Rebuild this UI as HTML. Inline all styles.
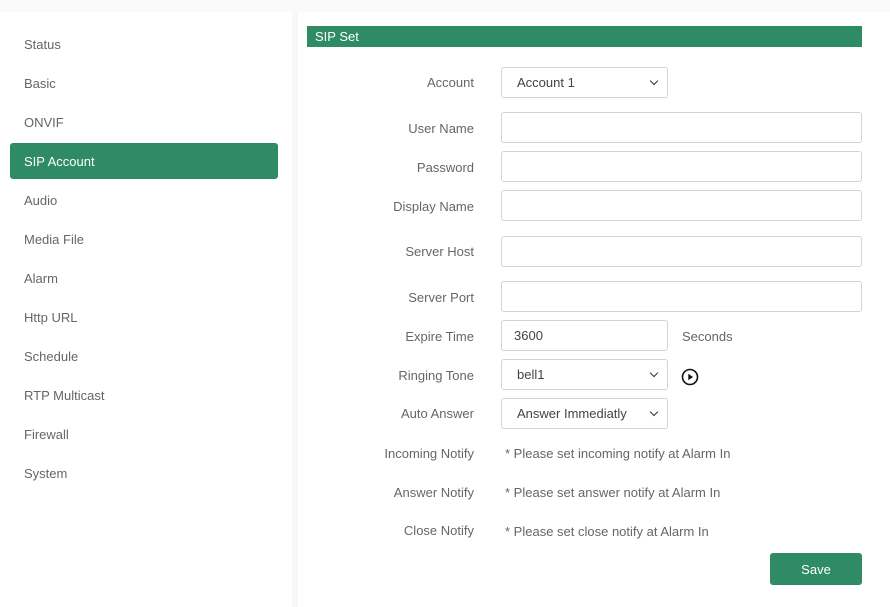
<!DOCTYPE html>
<html><head><meta charset="utf-8"><style>
*{box-sizing:border-box;margin:0;padding:0}
body{width:890px;height:607px;background:#fff;font-family:"Liberation Sans",Arial,sans-serif;font-size:13px;color:#666;position:relative;overflow:hidden}
.top{position:absolute;left:0;top:0;width:890px;height:12px;background:#fafafa}
.side{position:absolute;left:0;top:12px;width:292px;height:595px;background:#fff}
.divider{position:absolute;left:292px;top:12px;width:6px;height:595px;background:#f8f8f8}
.item{position:absolute;left:24px;height:20px;line-height:20px;top:1px}
.active{position:absolute;left:10px;top:143px;width:268px;height:36px;background:#2e8b63;border-radius:3px;color:#fff;padding-left:14px;line-height:37px}
.hdr{position:absolute;left:307px;top:26px;width:555px;height:21px;background:#2e8b63;color:#fff;padding-left:8px;line-height:22px}
.lbl{position:absolute;right:416px;height:20px;line-height:22px;text-align:right;white-space:nowrap}
.inp{position:absolute;left:501px;width:361px;height:31px;border:1px solid #d4d4d4;border-radius:3px;background:#fff}
.sel{width:167px;padding-left:15px;line-height:30px;color:#444}
.sel:after{content:"";position:absolute;right:10px;top:10px;width:5px;height:5px;border-right:1.5px solid #333;border-bottom:1.5px solid #333;transform:rotate(45deg)}
.note{position:absolute;left:505px;height:20px;line-height:22px}
.btn{position:absolute;left:770px;top:553px;width:92px;height:32px;background:#2e8b63;color:#fff;border-radius:3px;text-align:center;line-height:33px;font-size:13px}
</style></head><body>
<div class="top"></div><div class="side"></div><div class="divider"></div>
<div class="item" style="top:35px">Status</div>
<div class="item" style="top:74px">Basic</div>
<div class="item" style="top:113px">ONVIF</div>
<div class="active">SIP Account</div>
<div class="item" style="top:191px">Audio</div>
<div class="item" style="top:230px">Media File</div>
<div class="item" style="top:269px">Alarm</div>
<div class="item" style="top:308px">Http URL</div>
<div class="item" style="top:347px">Schedule</div>
<div class="item" style="top:386px">RTP Multicast</div>
<div class="item" style="top:425px">Firewall</div>
<div class="item" style="top:464px">System</div>
<div class="hdr">SIP Set</div>
<div class="lbl" style="top:72px">Account</div><div class="inp sel" style="top:67px">Account 1</div>
<div class="lbl" style="top:118px">User Name</div><div class="inp" style="top:112px"></div>
<div class="lbl" style="top:157px">Password</div><div class="inp" style="top:151px"></div>
<div class="lbl" style="top:196px">Display Name</div><div class="inp" style="top:190px"></div>
<div class="lbl" style="top:241px">Server Host</div><div class="inp" style="top:236px"></div>
<div class="lbl" style="top:287px">Server Port</div><div class="inp" style="top:281px"></div>
<div class="lbl" style="top:326px">Expire Time</div><div class="inp" style="top:320px;width:167px;padding-left:12px;line-height:30px;color:#444">3600</div>
<div style="position:absolute;left:682px;top:326px;line-height:22px">Seconds</div>
<div class="lbl" style="top:365px">Ringing Tone</div><div class="inp sel" style="top:359px">bell1</div>
<svg style="position:absolute;left:681px;top:368px" width="18" height="18" viewBox="0 0 18 18"><circle cx="9" cy="9" r="7.5" fill="none" stroke="#111" stroke-width="1.6"/><path d="M7.3 5.8 L12 9 L7.3 12.2Z" fill="#111"/></svg>
<div class="lbl" style="top:403px">Auto Answer</div><div class="inp sel" style="top:398px">Answer Immediatly</div>
<div class="lbl" style="top:443px">Incoming Notify</div><div class="note" style="top:443px">* Please set incoming notify at Alarm In</div>
<div class="lbl" style="top:482px">Answer Notify</div><div class="note" style="top:482px">* Please set answer notify at Alarm In</div>
<div class="lbl" style="top:520px">Close Notify</div><div class="note" style="top:521px">* Please set close notify at Alarm In</div>
<div class="btn">Save</div>
</body></html>
